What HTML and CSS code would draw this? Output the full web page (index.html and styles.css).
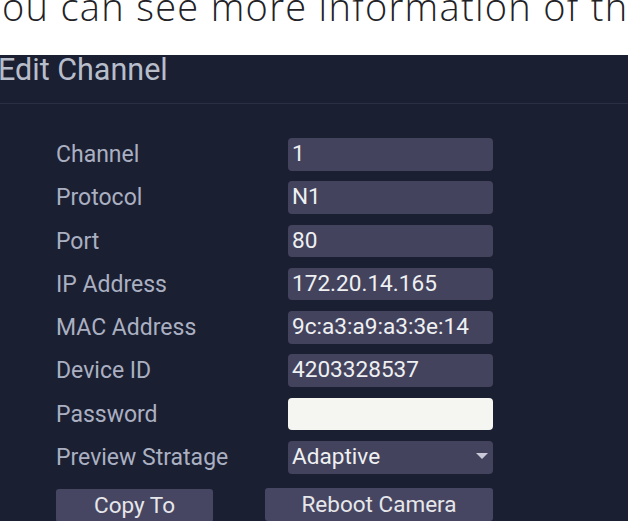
FILE: index.html
```html
<!DOCTYPE html>
<html lang="en">
<head>
<meta charset="utf-8">
<title>Edit Channel</title>
<link rel="stylesheet" href="styles.css">
</head>
<body>
<div class="doc-text"><p class="doc-line">ou can see more information of th</p></div>
<section class="panel">
  <header class="panel-head"><h1 class="panel-title">Edit Channel</h1></header>
  <div class="form">
    <span class="label">Channel</span><div class="field">1</div>
    <span class="label">Protocol</span><div class="field">N1</div>
    <span class="label">Port</span><div class="field">80</div>
    <span class="label">IP Address</span><div class="field">172.20.14.165</div>
    <span class="label">MAC Address</span><div class="field">9c:a3:a9:a3:3e:14</div>
    <span class="label">Device ID</span><div class="field">4203328537</div>
    <span class="label">Password</span><div class="field field-white"></div>
    <span class="label">Preview Stratage</span><div class="field field-select">Adaptive<svg class="caret" width="12" height="6" viewBox="0 0 12 6"><path d="M0 0H12L6 6Z" fill="#c9c9d8"/></svg></div>
  </div>
  <div class="actions">
    <button class="btn btn-copy">Copy To</button>
    <button class="btn btn-reboot">Reboot Camera</button>
  </div>
</section>
</body>
</html>
```
FILE: styles.css
```css
html, body {
  margin: 0;
  padding: 0;
  background: #ffffff;
  overflow: hidden;
}
body {
  width: 628px;
  height: 521px;
}
.doc-text {
  height: 55px;
  overflow: hidden;
}
.doc-line {
  margin: -12.5px 0 0 2px;
  font-family: "Open Sans", sans-serif;
  font-weight: 300;
  font-size: 38px;
  line-height: 36px;
  letter-spacing: 1.3px;
  color: #222226;
  white-space: nowrap;
}
.panel {
  background: #1b1f32;
  height: 466px;
  overflow: hidden;
  font-family: Roboto, "Liberation Sans", sans-serif;
}
.panel-head {
  height: 48px;
  border-bottom: 1px solid #2b2f43;
}
.panel-title {
  margin: 0 0 0 -2px;
  font-size: 30.5px;
  font-weight: 400;
  line-height: 30px;
  color: #b8bdca;
}
.form {
  display: grid;
  grid-template-columns: 232px 205px;
  grid-auto-rows: 32.6px;
  row-gap: 10.7px;
  padding: 34px 0 0 56px;
}
.label {
  font-size: 23px;
  line-height: 32.6px;
  padding-top: 1px;
  color: #aab0c1;
  white-space: nowrap;
}
.field {
  position: relative;
  background: #44435d;
  border-radius: 4px;
  font-size: 22.6px;
  line-height: 32.6px;
  padding: 0 0 0 4px;
  box-sizing: border-box;
  color: #eef0f2;
  white-space: nowrap;
}
.field-white {
  background: #f5f5f2;
}
.field-select {
  display: flex;
  align-items: center;
  justify-content: space-between;
  padding-right: 5px;
}
.caret {
  margin-top: -3px;
}
.actions {
  display: flex;
  gap: 52px;
  padding: 15px 0 0 56px;
}
.btn {
  height: 33px;
  border: none;
  border-radius: 3px;
  background: #474662;
  color: #e6e7ea;
  font-family: Roboto, "Liberation Sans", sans-serif;
  font-size: 22.5px;
  padding: 0;
}
.btn-copy {
  width: 157px;
}
.btn-reboot {
  width: 228px;
  margin-top: -1px;
}
```
